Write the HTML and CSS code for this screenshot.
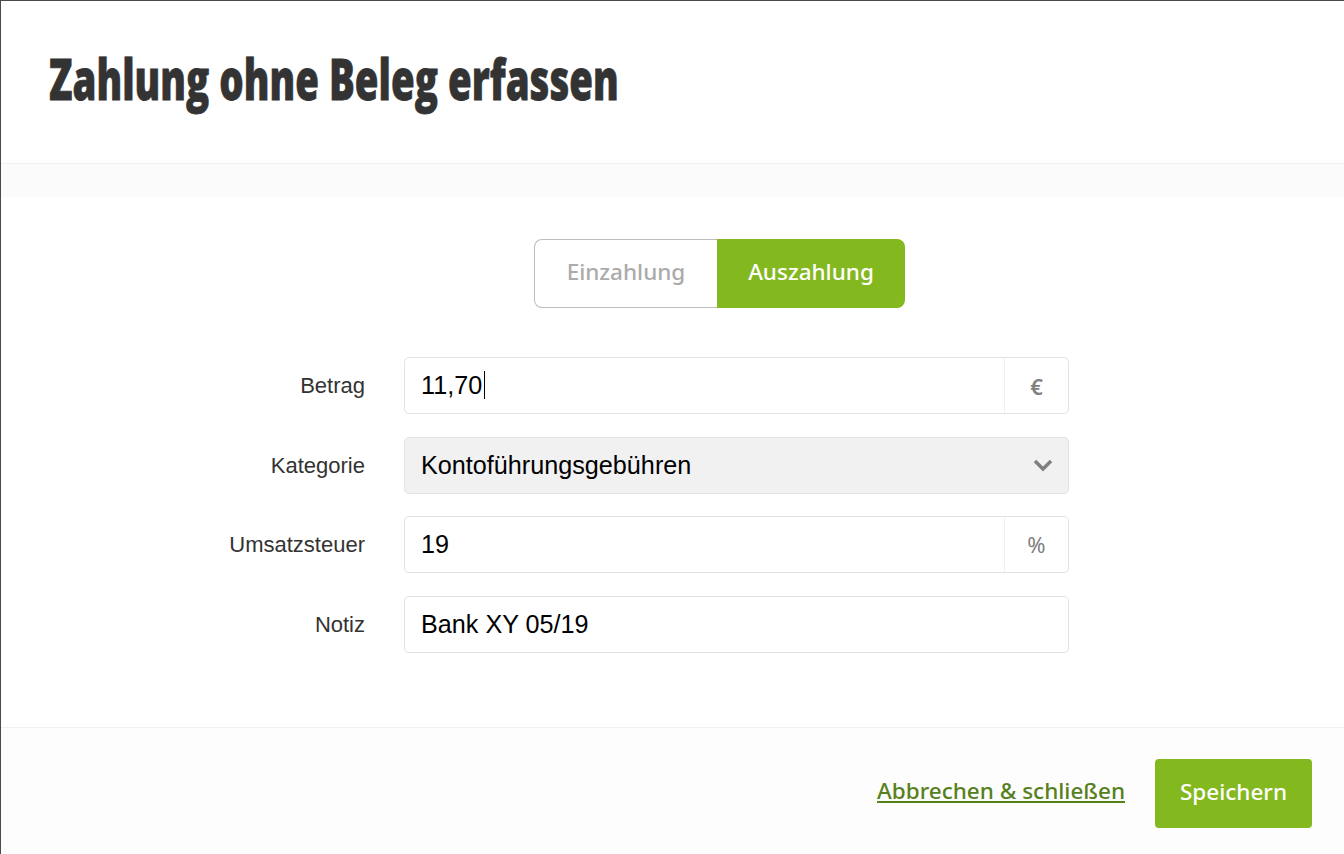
FILE: index.html
```html
<!DOCTYPE html>
<html lang="de">
<head>
    <meta charset="UTF-8">
    <title>Zahlung ohne Beleg erfassen</title>
    <link rel="stylesheet" href="styles.css">
</head>
<body>
    <div class="modal">
        <header class="modal-header">
            <h1>Zahlung ohne Beleg erfassen</h1>
        </header>
        <div class="modal-band"></div>

        <main class="modal-body">
            <div class="toggle">
                <span class="toggle-item">Einzahlung</span>
                <span class="toggle-item active">Auszahlung</span>
            </div>

            <form class="payment-form">
                <div class="form-group">
                    <label>Betrag</label>
                    <div class="field">
                        <span class="field-value">11,70<span class="caret"></span></span>
                        <span class="field-addon">€</span>
                    </div>
                </div>
                <div class="form-group">
                    <label>Kategorie</label>
                    <div class="field field-select">
                        <span class="field-value">Kontoführungsgebühren</span>
                        <svg class="chevron" width="20" height="13" viewBox="0 0 20 13">
                            <path d="M2 2 L10 10 L18 2" fill="none" stroke="#808080" stroke-width="3.4"/>
                        </svg>
                    </div>
                </div>
                <div class="form-group">
                    <label>Umsatzsteuer</label>
                    <div class="field">
                        <span class="field-value">19</span>
                        <span class="field-addon addon-light">%</span>
                    </div>
                </div>
                <div class="form-group">
                    <label>Notiz</label>
                    <div class="field">
                        <span class="field-value">Bank XY 05/19</span>
                    </div>
                </div>
            </form>
        </main>

        <footer class="modal-footer">
            <a href="#" class="cancel-link">Abbrechen &amp; schließen</a>
            <button type="button" class="save-btn">Speichern</button>
        </footer>
    </div>
</body>
</html>
```

FILE: styles.css
```css
/* General Styles */
html, body {
    margin: 0;
    padding: 0;
    background: #ffffff;
}

body {
    font-family: "Noto Sans", Arial, sans-serif;
    overflow: hidden;
}

.modal {
    display: flex;
    flex-direction: column;
    height: 854px;
    box-sizing: border-box;
    border-top: 1px solid #4a4a4a;
    border-left: 1px solid #4a4a4a;
}

.modal-header {
    height: 163px;
    box-sizing: border-box;
    padding: 44px 0 0 48px;
    border-bottom: 1px solid #f0f0f0;
}

h1 {
    margin: 0;
    font-family: "Open Sans", Arial, sans-serif;
    font-size: 56px;
    line-height: 66px;
    font-weight: 800;
    color: #333333;
    white-space: nowrap;
    -webkit-text-stroke: 0.8px #333333;
    transform: scaleX(0.686);
    transform-origin: left center;
}

.modal-band {
    height: 33px;
    background: #fbfbfb;
}

.modal-body {
    flex: 1;
    padding-top: 42px;
}

.toggle {
    display: flex;
    width: 371px;
    height: 69px;
    margin-left: 533px;
    box-sizing: border-box;
}

.toggle-item {
    display: flex;
    align-items: center;
    justify-content: center;
    width: 183px;
    box-sizing: border-box;
    padding-bottom: 4px;
    border: 1px solid #bdbdbd;
    border-right: none;
    border-radius: 8px 0 0 8px;
    font-size: 22.5px;
    font-weight: 500;
    color: #ababab;
}

.toggle-item.active {
    width: 188px;
    border: none;
    border-radius: 0 8px 8px 0;
    background: #84b81f;
    color: #ffffff;
}

.payment-form {
    display: flex;
    flex-direction: column;
    gap: 22.5px;
    margin-top: 49px;
}

.form-group {
    display: flex;
    align-items: center;
}

label {
    width: 364px;
    padding-top: 1px;
    text-align: right;
    font-family: "Liberation Sans", Arial, sans-serif;
    font-size: 22px;
    color: #333333;
}

.field {
    display: flex;
    align-items: center;
    width: 665px;
    height: 57px;
    margin-left: 39px;
    box-sizing: border-box;
    border: 1px solid #e2e2e2;
    border-radius: 5px;
    background: #ffffff;
}

.field-value {
    flex: 1;
    padding-left: 16px;
    font-family: "Liberation Sans", Arial, sans-serif;
    font-size: 25.2px;
    color: #000000;
}

.caret {
    display: inline-block;
    width: 1px;
    height: 28px;
    margin-left: 2px;
    vertical-align: -5px;
    background: #000000;
}

.field-addon {
    display: flex;
    align-items: center;
    justify-content: center;
    width: 64px;
    height: 100%;
    box-sizing: border-box;
    border-left: 1px solid #efefef;
    font-size: 22px;
    font-weight: 600;
    color: #808080;
}

.addon-light {
    padding-bottom: 2px;
    font-weight: 400;
}

.field-select {
    background: #f1f1f1;
}

.chevron {
    margin-right: 15px;
}

.modal-footer {
    display: flex;
    justify-content: flex-end;
    align-items: center;
    gap: 30px;
    height: 127px;
    box-sizing: border-box;
    padding: 5px 32px 0 0;
    border-top: 1px solid #f0f0f0;
    background: #fdfdfd;
}

.cancel-link {
    margin-bottom: 6px;
    font-size: 22.5px;
    font-weight: 500;
    color: #56801c;
    text-decoration: underline;
}

.save-btn {
    width: 157px;
    height: 69px;
    padding: 0 0 4px;
    border: none;
    border-radius: 4px;
    background: #84b81f;
    color: #ffffff;
    font-family: "Noto Sans", Arial, sans-serif;
    font-size: 22.5px;
    font-weight: 500;
    cursor: pointer;
}
```
